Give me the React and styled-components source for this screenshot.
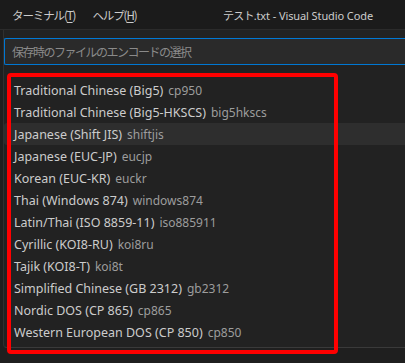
import React from 'react'
import styled, { createGlobalStyle } from 'styled-components'

const Global = createGlobalStyle`
  html, body {
    margin: 0;
    padding: 0;
    background: #1f1f1f;
  }
  body {
    font-family: "Noto Sans", "Noto Sans CJK JP", sans-serif;
    color: #cccccc;
  }
`

const Page = styled.div`
  position: relative;
  width: 405px;
  height: 363px;
  overflow: hidden;
  background: #1f1f1f;
`

const TitleBar = styled.div`
  height: 30px;
  display: flex;
  align-items: center;
  background: #1b1b1b;
  border-bottom: 1px solid #2b2b2b;
  box-sizing: border-box;
  font-family: "Noto Sans CJK JP", "Noto Sans", sans-serif;
  color: #cccccc;
  white-space: nowrap;
`

const Menu = styled.div`
  display: flex;
  gap: 17px;
  padding-left: 12px;
  font-size: 11.5px;
  letter-spacing: -1.1px;
`

const MenuItem = styled.span`
  u {
    text-decoration: underline;
    text-underline-offset: 2px;
  }
`

const Title = styled.span`
  margin-left: auto;
  margin-right: 32px;
  font-family: "Noto Sans", "Noto Sans CJK JP", sans-serif;
  font-size: 11px;
  letter-spacing: -0.1px;
`

const Kana = styled.span`
  letter-spacing: -0.8px;
`

const QuickPick = styled.div`
  margin-left: 3px;
  height: 318px;
  background: #222222;
  border-left: 1px solid #303030;
  border-bottom: 1px solid #3a3a3a;
  border-radius: 0 0 0 4px;
  box-sizing: border-box;
  padding-top: 8px;
  display: flex;
  flex-direction: column;
`

const InputBox = styled.div`
  height: 27px;
  border: 1px solid #0078d4;
  border-right: none;
  border-radius: 2px 0 0 2px;
  background: #2a2a2a;
  box-sizing: border-box;
  display: flex;
  align-items: center;
  padding-left: 7px;
  font-family: "Noto Sans CJK JP", "Noto Sans", sans-serif;
  font-size: 12px;
  letter-spacing: -1.5px;
  color: #8a8a8a;
`

const List = styled.div`
  margin-top: 14px;
  flex: 1;
  overflow: hidden;
`

const Row = styled.div`
  height: 22px;
  display: flex;
  align-items: center;
  padding-left: 10px;
  white-space: nowrap;
  background: ${p => (p.$active ? '#2e2e2e' : 'transparent')};
  border-radius: ${p => (p.$active ? '3px 0 0 3px' : '0')};
`

const Label = styled.span`
  font-size: 12.5px;
  color: #cccccc;
`

const Desc = styled.span`
  margin-left: 5px;
  font-size: 12px;
  color: #9d9d9d;
`

const Highlight = styled.div`
  position: absolute;
  left: 7px;
  top: 73px;
  width: 331px;
  height: 281px;
  border: 4px solid #ff0000;
  border-radius: 4px;
  box-sizing: border-box;
  pointer-events: none;
`

const encodings = [
  ['Traditional Chinese (Big5)', 'cp950'],
  ['Traditional Chinese (Big5-HKSCS)', 'big5hkscs'],
  ['Japanese (Shift JIS)', 'shiftjis'],
  ['Japanese (EUC-JP)', 'eucjp'],
  ['Korean (EUC-KR)', 'euckr'],
  ['Thai (Windows 874)', 'windows874'],
  ['Latin/Thai (ISO 8859-11)', 'iso885911'],
  ['Cyrillic (KOI8-RU)', 'koi8ru'],
  ['Tajik (KOI8-T)', 'koi8t'],
  ['Simplified Chinese (GB 2312)', 'gb2312'],
  ['Nordic DOS (CP 865)', 'cp865'],
  ['Western European DOS (CP 850)', 'cp850'],
]

export default function App() {
  return (
    <Page>
      <Global />
      <TitleBar>
        <Menu>
          <MenuItem>ターミナル(<u>T</u>)</MenuItem>
          <MenuItem>ヘルプ(<u>H</u>)</MenuItem>
        </Menu>
        <Title><Kana>テスト</Kana>.txt - Visual Studio Code</Title>
      </TitleBar>
      <QuickPick>
        <InputBox>保存時のファイルのエンコードの選択</InputBox>
        <List>
          {encodings.map(([label, id]) => (
            <Row key={id} $active={id === 'shiftjis'}>
              <Label>{label}</Label>
              <Desc>{id}</Desc>
            </Row>
          ))}
        </List>
      </QuickPick>
      <Highlight />
    </Page>
  )
}
